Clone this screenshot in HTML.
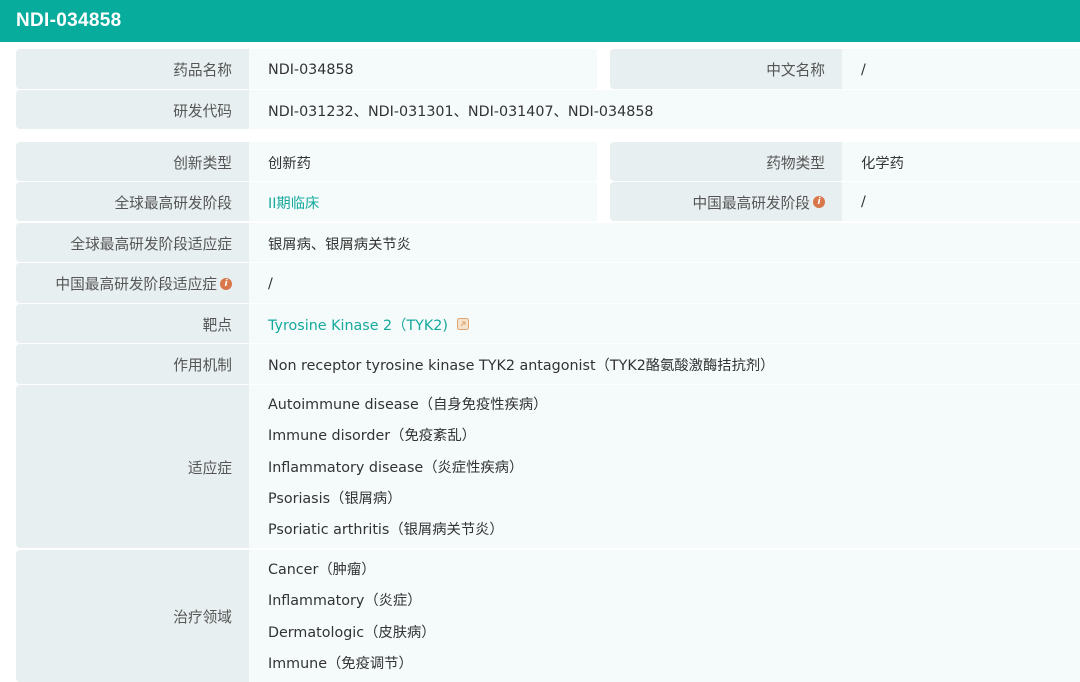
<!DOCTYPE html>
<html><head><meta charset="utf-8"><style>
*{margin:0;padding:0;box-sizing:border-box}
body{width:1080px;height:682px;overflow:hidden;background:#fff;font-family:"DejaVu Sans","Noto Sans CJK SC",sans-serif;font-size:14.3px;color:#333;position:relative}
.hd{position:absolute;left:0;top:0;width:1080px;height:42px;background:#08ac9d;color:#fff;font-weight:bold;font-size:19px;line-height:40px;padding-top:1px;padding-left:16px;font-family:"Liberation Sans",sans-serif;letter-spacing:0.3px}
.l,.v{position:absolute;display:flex;align-items:center;padding-top:1px}
.l{background:#e7eff0;justify-content:flex-end;padding-right:17px;color:#555;border-radius:4px 0 0 4px;font-size:14.7px}
.v{background:#f5fbfb;padding-left:19px}
.t{color:#16a99c}
.ml{flex-direction:column;align-items:flex-start;justify-content:flex-start}
.ml div{height:31.3px;line-height:31.3px}
.i{display:inline-block;width:12px;height:12px;border-radius:50%;background:#d9774a;color:#fff;font-size:9px;font-style:italic;font-weight:bold;text-align:center;line-height:12px;margin-left:3px}
</style></head><body>
<div class="hd">NDI-034858</div>

<div class="l" style="left:16px;top:49px;width:233px;height:40px">药品名称</div>
<div class="v" style="left:249px;top:49px;width:348px;height:40px">NDI-034858</div>
<div class="l" style="left:610px;top:49px;width:232px;height:40px">中文名称</div>
<div class="v" style="left:842px;top:49px;width:238px;height:40px">/</div>
<div class="l" style="left:16px;top:90px;width:233px;height:39px">研发代码</div>
<div class="v" style="left:249px;top:90px;width:831px;height:39px">NDI-031232、NDI-031301、NDI-031407、NDI-034858</div>

<div class="l" style="left:16px;top:142px;width:233px;height:39px">创新类型</div>
<div class="v" style="left:249px;top:142px;width:348px;height:39px">创新药</div>
<div class="l" style="left:610px;top:142px;width:232px;height:39px">药物类型</div>
<div class="v" style="left:842px;top:142px;width:238px;height:39px">化学药</div>
<div class="l" style="left:16px;top:182px;width:233px;height:39px">全球最高研发阶段</div>
<div class="v t" style="left:249px;top:182px;width:348px;height:39px">II期临床</div>
<div class="l" style="left:610px;top:182px;width:232px;height:39px">中国最高研发阶段<span class="i">i</span></div>
<div class="v" style="left:842px;top:182px;width:238px;height:39px">/</div>
<div class="l" style="left:16px;top:223px;width:233px;height:39px">全球最高研发阶段适应症</div>
<div class="v" style="left:249px;top:223px;width:831px;height:39px">银屑病、银屑病关节炎</div>
<div class="l" style="left:16px;top:263px;width:233px;height:40px">中国最高研发阶段适应症<span class="i">i</span></div>
<div class="v" style="left:249px;top:263px;width:831px;height:40px">/</div>
<div class="l" style="left:16px;top:304px;width:233px;height:39px">靶点</div>
<div class="v t" style="left:249px;top:304px;width:831px;height:39px">Tyrosine Kinase 2（TYK2)<svg width="14" height="14" viewBox="0 0 14 14" style="margin-left:8px"><rect x="1.5" y="1.5" width="11" height="11" rx="2" fill="#f6e3cf" stroke="#e0a56e"/><path d="M5 9l4-4M6 5h3v3" stroke="#e0a56e" fill="none"/></svg></div>
<div class="l" style="left:16px;top:344px;width:233px;height:40px">作用机制</div>
<div class="v" style="left:249px;top:344px;width:831px;height:40px">Non receptor tyrosine kinase TYK2 antagonist（TYK2酪氨酸激酶拮抗剂）</div>
<div class="l" style="left:16px;top:385px;width:233px;height:163px">适应症</div>
<div class="v ml" style="left:249px;top:385px;width:831px;height:163px;padding-top:5px">
<div>Autoimmune disease（自身免疫性疾病）</div><div>Immune disorder（免疫紊乱）</div><div>Inflammatory disease（炎症性疾病）</div><div>Psoriasis（银屑病）</div><div>Psoriatic arthritis（银屑病关节炎）</div></div>
<div class="l" style="left:16px;top:550px;width:233px;height:132px">治疗领域</div>
<div class="v ml" style="left:249px;top:550px;width:831px;height:132px;padding-top:5px">
<div>Cancer（肿瘤）</div><div>Inflammatory（炎症）</div><div>Dermatologic（皮肤病）</div><div>Immune（免疫调节）</div></div>
</body></html>
